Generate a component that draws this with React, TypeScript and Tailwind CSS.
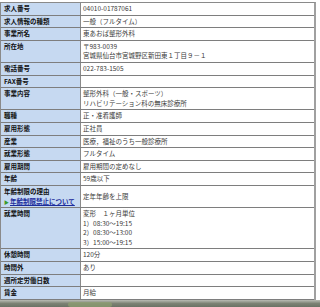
import React from "react";

type Row = { label: React.ReactNode; value: React.ReactNode[]; center?: boolean };

const rows: Row[] = [
  { label: "求人番号", value: ["04010-01787061"] },
  { label: "求人情報の種類", value: ["一般（フルタイム）"] },
  { label: "事業所名", value: ["東あおば整形外科"] },
  { label: "所在地", value: ["〒983-0039", "宮城県仙台市宮城野区新田東１丁目９－１"] },
  { label: "電話番号", value: ["022-783-1505"] },
  { label: "FAX番号", value: [""] },
  { label: "事業内容", value: ["整形外科（一般・スポーツ）", "リハビリテーション科の無床診療所"] },
  { label: "職種", value: ["正・准看護師"] },
  { label: "雇用形態", value: ["正社員"] },
  { label: "産業", value: ["医療，福祉のうち一般診療所"] },
  { label: "就業形態", value: ["フルタイム"] },
  { label: "雇用期間", value: ["雇用期間の定めなし"] },
  { label: "年齢", value: ["59歳以下"] },
  {
    label: (
      <>
        <div>年齢制限の理由</div>
        <div className="flex items-center">
          <span className="text-[#3a9a2a] text-[5px] mr-[1px]">▶</span>
          <span className="text-[#1c2c9c] underline">年齢制限禁止について</span>
        </div>
      </>
    ),
    value: ["定年年齢を上限"],
    center: true,
  },
  {
    label: "就業時間",
    value: ["変形　１ヶ月単位", "1）08:30～19:15", "2）08:30～13:00", "3）15:00～19:15"],
  },
  { label: "休憩時間", value: ["120分"] },
  { label: "時間外", value: ["あり"] },
  { label: "週所定労働日数", value: [""] },
  { label: "賃金", value: ["月給"] },
];

export default function App() {
  return (
    <div
      className="w-[320px] h-[307px] bg-white overflow-hidden flex flex-col"
      style={{ fontFamily: '"Noto Sans CJK JP", "Noto Sans", sans-serif' }}
    >
      <div className="pt-[2px] flex-1">
        <div className="w-[316px] border-t border-l border-r-[2px] border-[#8a8a8a] border-r-[#a0a0a0]">
          {rows.map((r, i) => (
            <div key={i} className="flex border-b border-[#7e7e7e] text-[6.5px] leading-[9.6px]">
              <div className="w-[80px] shrink-0 bg-[#c6d9f1] border-r border-[#8a8a8a] pl-[3px] py-[1px] font-bold text-[#111]">
                {r.label}
              </div>
              <div
                className={
                  "flex-1 pl-[2px] py-[1px] text-[#3a3a3a] flex flex-col " +
                  (r.center ? "justify-center" : "justify-start")
                }
              >
                {r.value.map((v, j) => (
                  <div key={j} className="h-[9.6px] whitespace-nowrap">
                    {v}
                  </div>
                ))}
              </div>
            </div>
          ))}
        </div>
      </div>
      <div className="h-[7px] relative bg-gradient-to-b from-[#b9bcb4] via-[#7c8274] to-[#6a7264]">
        <div className="absolute left-[68px] top-[2px] w-[44px] h-[5px] bg-[#8ea070] rounded-sm opacity-70" />
      </div>
    </div>
  );
}
